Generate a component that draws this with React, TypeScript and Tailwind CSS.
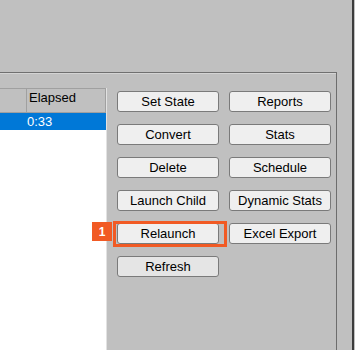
const leftButtons = ['Set State', 'Convert', 'Delete', 'Launch Child', 'Relaunch', 'Refresh'];
const rightButtons = ['Reports', 'Stats', 'Schedule', 'Dynamic Stats', 'Excel Export'];

const WinButton = ({ label, dim }: { label: string; dim?: boolean }) => (
  <button
    className={
      'h-[21px] w-[102px] rounded-[3px] border border-[#7a7a7a] text-[13px] leading-none text-black ' +
      (dim ? 'bg-[#e5e5e5]' : 'bg-[#efefef]')
    }
  >
    {label}
  </button>
);

export default function App() {
  return (
    <div
      className="flex h-[350px] w-[355px] overflow-hidden bg-[#c0c0c0]"
      style={{ fontFamily: '"Liberation Sans", Arial, sans-serif' }}
    >
      <div className="flex w-[352px] flex-col">
        <div className="h-[72px] shrink-0" />
        <div className="flex flex-1">
          <div className="flex w-[337px] flex-col border-t border-r border-t-[#707070] border-r-[#6d6d6d]">
            <div className="h-px bg-[#d4d4d4]" />
            <div className="flex flex-1">
              {/* job table */}
              <div className="mt-[14px] flex w-[107px] flex-col border-r border-[#e2e2e2]">
                <div className="flex h-[25px] border-t border-b border-[#a0a0a0]">
                  <div className="w-[27px] border-r border-[#a0a0a0]" />
                  <div className="flex-1 border-r border-[#a0a0a0] pl-[2px] pt-[1px] text-[13px] leading-[15px] text-black">
                    Elapsed
                  </div>
                </div>
                <div className="flex h-[17px] items-center bg-[#0078d7] pl-[27px] text-[13px] leading-none text-white">
                  0:33
                </div>
                <div className="flex-1 bg-white" />
              </div>

              {/* action buttons */}
              <div className="relative ml-[10px] mt-[17px] flex h-fit gap-[10px]">
                <div className="flex flex-col gap-[12px]">
                  {leftButtons.map((b) => (
                    <WinButton key={b} label={b} dim={b === 'Refresh'} />
                  ))}
                </div>
                <div className="flex flex-col gap-[12px]">
                  {rightButtons.map((b) => (
                    <WinButton key={b} label={b} />
                  ))}
                </div>
                <div className="pointer-events-none absolute left-[-4px] top-[130px] h-[26px] w-[114px] border-[3px] border-[#f15a24]" />
                <div className="absolute left-[-25px] top-[131px] flex h-[19px] w-[20px] items-center justify-center bg-[#f15a24] text-[12px] font-bold text-white">
                  1
                </div>
              </div>
            </div>
          </div>
        </div>
      </div>
      <div className="w-[2px] bg-[#3c3c3c]" />
      <div className="flex-1" />
    </div>
  );
}
